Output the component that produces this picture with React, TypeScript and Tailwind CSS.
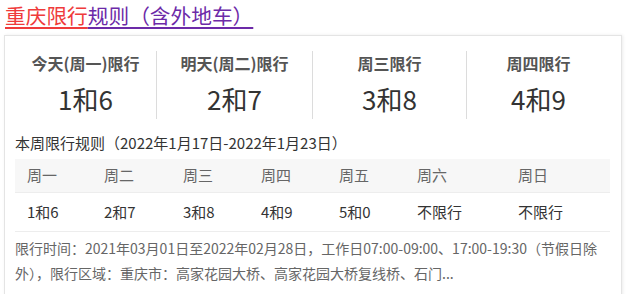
import React from 'react';

const stats = [
  { label: '今天(周一)限行', value: '1和6', w: 'w-[141px]' },
  { label: '明天(周二)限行', value: '2和7', w: 'w-[156px]' },
  { label: '周三限行', value: '3和8', w: 'w-[154px]' },
  { label: '周四限行', value: '4和9', w: 'flex-1' },
];

const week = [
  { day: '周一', nums: '1和6' },
  { day: '周二', nums: '2和7' },
  { day: '周三', nums: '3和8' },
  { day: '周四', nums: '4和9' },
  { day: '周五', nums: '5和0' },
  { day: '周六', nums: '不限行' },
  { day: '周日', nums: '不限行' },
];

const cols = 'grid grid-cols-[77px_79px_78px_78px_78px_101px_1fr]';

export default function App() {
  return (
    <div className="w-[628px] h-[294px] overflow-hidden bg-white font-['Noto_Sans_CJK_SC','Noto_Sans',sans-serif]">
      {/* Title */}
      <div className="pl-[5px] pt-[1px] h-[35px]">
        <a className="text-[20.7px] leading-[28px] cursor-pointer">
          <span className="text-[#ef3b3b] underline decoration-[#ef3b3b] underline-offset-[3px]">重庆限行</span>
          <span className="text-[#6c2aa8] underline decoration-[#6c2aa8] underline-offset-[3px]">规则（含外地车）</span>
        </a>
      </div>

      {/* Card */}
      <div className="ml-[4px] w-[618px] border border-[#e4e4e4] shadow-[1px_0_3px_rgba(0,0,0,0.08)] pl-[10px] pr-[11px] pb-4">
        {/* Stats */}
        <div className="flex pt-[15px]">
          {stats.map((s, i) => (
            <div
              key={s.label}
              className={`${s.w} h-[68px] flex flex-col items-center ${i > 0 ? 'border-l border-[#dcdcdc]' : ''}`}
            >
              <div className="text-[16px] leading-[24px] font-bold text-[#555]">{s.label}</div>
              <div className="mt-[6px] text-[26px] leading-[36px] text-[#333]">{s.value}</div>
            </div>
          ))}
        </div>

        {/* Weekly */}
        <div className="mt-[12px] text-[15px] leading-[24px] text-[#333]">
          本周限行规则（2022年1月17日-2022年1月23日）
        </div>

        <div className="mt-[4px] text-[15px]">
          <div className={`${cols} h-[33px] items-center bg-[#f7f7f7] text-[#666]`}>
            {week.map((w) => (
              <div key={w.day} className="pl-[12px]">{w.day}</div>
            ))}
          </div>
          <div className={`${cols} h-[40px] items-center border-t border-b border-[#ededed] text-[#333]`}>
            {week.map((w) => (
              <div key={w.day} className="pl-[12px]">{w.nums}</div>
            ))}
          </div>
        </div>

        <p className="mt-[4px] text-[14px] leading-[25px] text-[#666]">
          限行时间：2021年03月01日至2022年02月28日，工作日07:00-09:00、17:00-19:30（节假日除外），限行区域：重庆市：高家花园大桥、高家花园大桥复线桥、石门...
        </p>
      </div>
    </div>
  );
}
